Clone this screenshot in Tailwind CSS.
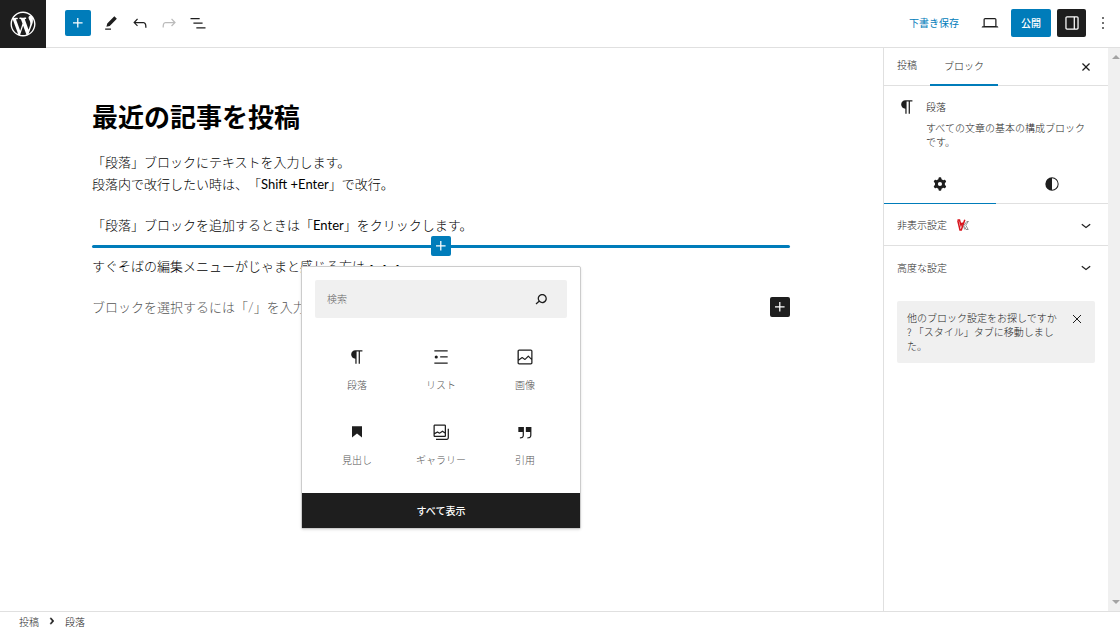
<!DOCTYPE html>
<html lang="ja">
<head>
  <meta charset="UTF-8" />
  <meta name="viewport" content="width=device-width, initial-scale=1.0"/>
  <title>投稿の編集</title>
  <script src="https://cdn.jsdelivr.net/npm/@tailwindcss/browser@4"></script>
</head>
<body class="h-screen flex flex-col overflow-hidden bg-white text-[#1e1e1e] text-[10px] font-light font-['Noto_Sans_CJK_JP',sans-serif] [text-spacing-trim:space-all]">

  <!-- Header -->
  <header class="flex h-12 shrink-0 border-b border-[#e0e0e0]">
    <a href="#" aria-label="投稿一覧" class="flex w-[46px] h-12 shrink-0 items-center justify-center bg-[#1e1e1e] text-white">
      <svg class="size-[30px]" viewBox="-2 -2 24 24" fill="currentColor"><path d="M20 10c0-5.51-4.49-10-10-10C4.48 0 0 4.49 0 10c0 5.52 4.48 10 10 10 5.51 0 10-4.48 10-10zM7.78 15.37L4.37 6.22c.55-.02 1.17-.08 1.17-.08.5-.06.44-1.13-.06-1.11 0 0-1.45.11-2.37.11-.18 0-.37 0-.58-.01C4.12 2.69 6.87 1.11 10 1.11c2.33 0 4.45.87 6.05 2.34-.68-.11-1.65.39-1.65 1.58 0 .74.45 1.36.9 2.1.35.61.55 1.36.55 2.46 0 1.49-1.4 5-1.4 5l-3.03-8.37c.54-.02.82-.17.82-.17.5-.05.44-1.25-.06-1.22 0 0-1.44.12-2.38.12-.87 0-2.33-.12-2.33-.12-.5-.03-.56 1.2-.06 1.22l.92.08 1.26 3.41zM17.41 10c.24-.64.74-1.87.43-4.25.7 1.29 1.05 2.71 1.05 4.25 0 3.29-1.73 6.24-4.4 7.78.97-2.59 1.94-5.2 2.92-7.78zM6.1 18.09C3.12 16.65 1.11 13.53 1.11 10c0-1.3.23-2.48.72-3.59C3.25 10.3 4.67 14.2 6.1 18.09zm4.03-6.63l2.58 6.98c-.86.29-1.76.45-2.71.45-.79 0-1.57-.11-2.29-.33.81-2.38 1.62-4.74 2.42-7.1z"/></svg>
    </a>
    <div class="flex flex-1 h-[46px] items-center justify-between pl-[19px] pr-[7px]">
      <div class="flex items-center">
        <button aria-label="ブロック挿入" class="flex size-[26px] mr-[5px] items-center justify-center rounded-xs bg-[#007cba] text-white">
          <svg class="size-5" viewBox="0 0 24 24" fill="currentColor"><path d="M11 12.5V17.5H12.5V12.5H17.5V11H12.5V6H11V11H6V12.5H11Z"/></svg>
        </button>
        <button aria-label="ツール" class="flex w-[29px] justify-center">
          <svg class="size-5" viewBox="0 0 24 24" fill="currentColor"><path d="m19 7-3-3-8.5 8.5-1 4 4-1L19 7Zm-7 11.5H5V20h7v-1.5Z"/></svg>
        </button>
        <button aria-label="元に戻す" class="flex w-[29px] justify-center">
          <svg class="size-5" viewBox="0 0 24 24" fill="currentColor"><path d="M18.3 11.7c-.6-.6-1.4-.9-2.3-.9H6.7l2.9-3.3-1.1-1-4.5 5L8.5 16l1-1-2.7-2.7H16c.5 0 .9.2 1.3.5 1 1 1 3.4 1 4.5v.3h1.5v-.2c0-1.5 0-4.3-1.5-5.7z"/></svg>
        </button>
        <button aria-label="やり直し" disabled class="flex w-[29px] justify-center text-[#bbb]">
          <svg class="size-5" viewBox="0 0 24 24" fill="currentColor"><path d="M15.6 6.5l-1.1 1 2.9 3.3H8c-.9 0-1.7.3-2.3.9-1.4 1.5-1.4 4.2-1.4 5.6v.2h1.5v-.3c0-1.1 0-3.5 1-4.5.3-.3.7-.5 1.3-.5h9.2L14.5 15l1.1 1.1 4.6-4.6-4.6-5z"/></svg>
        </button>
        <button aria-label="リスト表示" class="flex w-[29px] justify-center">
          <svg class="size-5" viewBox="0 0 24 24" fill="currentColor"><path d="M3 6h11v1.5H3V6Zm3.5 5.5h11V13h-11v-1.5ZM21 17H10v1.5h11V17Z"/></svg>
        </button>
      </div>
      <div class="flex items-center">
        <button class="px-4 pb-[2px] font-normal text-[#007cba]">下書き保存</button>
        <button aria-label="プレビュー" class="flex w-[29px] mr-[7px] justify-center">
          <svg class="size-5" viewBox="0 0 24 24" fill="currentColor"><path d="M20.5 16h-.7V8c0-1.1-.9-2-2-2H6.2c-1.1 0-2 .9-2 2v8h-.7c-.8 0-1.5.7-1.5 1.5h20c0-.8-.7-1.5-1.5-1.5zM5.7 8c0-.3.2-.5.5-.5h11.6c.3 0 .5.2.5.5v7.6H5.7V8z"/></svg>
        </button>
        <button class="w-10 h-7 mr-[6px] pb-[2px] rounded-xs bg-[#007cba] font-medium text-white">公開</button>
        <button aria-label="設定" class="flex w-[29px] h-7 mr-[7px] items-center justify-center rounded-xs bg-[#1e1e1e] text-white">
          <svg class="size-5" viewBox="0 0 24 24" fill="currentColor"><path d="M18 4H6c-1.1 0-2 .9-2 2v12c0 1.1.9 2 2 2h12c1.1 0 2-.9 2-2V6c0-1.1-.9-2-2-2zm-4 14.5H6c-.3 0-.5-.2-.5-.5V6c0-.3.2-.5.5-.5h8v13zm4.5-.5c0 .3-.2.5-.5.5h-2.5v-13H18c.3 0 .5.2.5.5v12z"/></svg>
        </button>
        <button aria-label="オプション" class="flex justify-center">
          <svg class="size-5" viewBox="0 0 24 24" fill="currentColor"><path d="M13 19h-2v-2h2v2zm0-6h-2v-2h2v2zm0-6h-2V5h2v2z"/></svg>
        </button>
      </div>
    </div>
  </header>

  <div class="flex flex-1 min-h-0">
    <!-- Canvas -->
    <main class="flex-1 min-w-0 px-[92px] pt-[51px] text-black">
      <div class="max-w-[698px] text-[13px] leading-[22px] font-['Lato','Noto_Sans_CJK_JP',sans-serif]">
        <h1 class="mb-4 text-[26px] leading-9 font-bold">最近の記事を投稿</h1>
        <p class="mb-[19px]">「段落」ブロックにテキストを入力します。<br>段落内で改行したい時は、「<span class="font-normal">Shift +Enter</span>」で改行。</p>
        <div class="relative mb-[19px]">
          <p>「段落」ブロックを追加するときは「<span class="font-normal">Enter</span>」をクリックします。</p>

          <!-- Insertion point -->
          <div class="absolute inset-x-0 top-full h-5 flex items-center">
            <div class="w-full h-[3px] rounded-full bg-[#007cba]"></div>
            <button aria-label="ブロックを追加" class="absolute left-1/2 -translate-x-1/2 flex size-5 items-center justify-center rounded-xs bg-[#007cba] text-white">
              <svg class="size-5" viewBox="0 0 24 24" fill="currentColor"><path d="M11 12.5V17.5H12.5V12.5H17.5V11H12.5V6H11V11H6V12.5H11Z"/></svg>
            </button>
          </div>

          <!-- Quick inserter -->
          <div class="absolute z-10 top-full left-1/2 -translate-x-1/2 mt-[30px] w-[280px] rounded-xs border border-[#ccc] bg-white text-[#1e1e1e] text-[10px] leading-4 shadow-sm font-['Noto_Sans_CJK_JP',sans-serif]">
            <div class="flex h-[38px] mx-[13px] mt-[13px] items-center rounded-xs bg-[#f0f0f0] pl-3 pr-4">
              <input type="search" aria-label="検索" placeholder="検索" class="flex-1 min-w-0 bg-transparent outline-none placeholder:text-[#666]">
              <svg class="size-5" viewBox="0 0 24 24" fill="currentColor"><path d="M13.5 6C10.5 6 8 8.5 8 11.5c0 1.1.3 2.1.9 3l-3.4 3 1 1.1 3.4-2.9c1 .9 2.2 1.4 3.6 1.4 3 0 5.5-2.5 5.5-5.5C19 8.5 16.5 6 13.500 6zm0 9.500c-2.200 0-4-1.800-4-4s1.800-4 4-4 4 1.800 4 4-1.800 4-4 4z"/></svg>
            </div>
            <div class="grid grid-cols-3 mx-[13px] mt-[23px] mb-[2px] text-[#555]">
              <button class="flex h-[75px] flex-col items-center gap-[10px] pt-[6px]">
                <svg class="size-5 text-[#1e1e1e]" viewBox="0 0 24 24" fill="currentColor"><path d="m9.996 14v-.225l.004 0v6.225h1.5v-14.5h2.5v14.5h1.5v-14.5h3v-1.5h-8.504c-2.761 0-5 2.239-5 5 0 2.761 2.239 5 5 5z"/></svg>
                段落
              </button>
              <button class="flex h-[75px] flex-col items-center gap-[10px] pt-[6px]">
                <svg class="size-5 text-[#1e1e1e]" viewBox="0 0 24 24" fill="currentColor"><path d="M4 4v1.5h16V4H4zm7 8.7h9v-1.5h-9v1.5zM4 20h16v-1.5H4V20zm4.2-8a1.9 1.9 0 1 0-3.8 0 1.9 1.9 0 0 0 3.8 0z"/></svg>
                リスト
              </button>
              <button class="flex h-[75px] flex-col items-center gap-[10px] pt-[6px]">
                <svg class="size-5 text-[#1e1e1e]" viewBox="0 0 24 24" fill="currentColor"><path d="M19 3H5c-1.1 0-2 .9-2 2v14c0 1.1.9 2 2 2h14c1.1 0 2-.9 2-2V5c0-1.1-.9-2-2-2zM5 4.5h14c.3 0 .5.2.5.5v8.4l-3-2.9c-.3-.3-.8-.3-1 0L11.9 14 9 12c-.3-.2-.6-.2-.8 0l-3.6 2.6V5c-.1-.3.1-.5.4-.5zm14 15H5c-.3 0-.5-.2-.5-.5v-2.4l4.1-3 3 1.9c.3.2.7.2.9-.1L16 12l3.5 3.4V19c0 .3-.2.5-.5.5z"/></svg>
                画像
              </button>
              <button class="flex h-[75px] flex-col items-center gap-[10px] pt-[6px]">
                <svg class="size-5 text-[#1e1e1e]" viewBox="0 0 24 24" fill="currentColor"><path d="M6 5V18.591L12 13.847L18 18.591V5H6Z"/></svg>
                見出し
              </button>
              <button class="flex h-[75px] flex-col items-center gap-[10px] pt-[6px]">
                <svg class="size-5 text-[#1e1e1e]" viewBox="0 0 24 24" fill="currentColor" fill-rule="evenodd"><path d="M16.375 4.5H4.625a.125.125 0 0 0-.125.125v8.254l2.859-1.54a.75.75 0 0 1 .68-.016l2.384 1.142 2.89-2.074a.75.75 0 0 1 .874 0l2.313 1.66V4.625a.125.125 0 0 0-.125-.125Zm.125 9.398-2.75-1.975-2.813 2.02a.75.75 0 0 1-.76.067l-2.444-1.17L4.5 14.583v1.792c0 .069.056.125.125.125h11.75a.125.125 0 0 0 .125-.125v-2.477ZM4.625 3C3.728 3 3 3.728 3 4.625v11.75C3 17.273 3.728 18 4.625 18h11.75c.898 0 1.625-.727 1.625-1.625V4.625C18 3.728 17.273 3 16.375 3H4.625ZM20 8v11c0 .69-.31 1-.999 1H6v1.5h13.001c1.52 0 2.499-.982 2.499-2.5V8H20Z"/></svg>
                ギャラリー
              </button>
              <button class="flex h-[75px] flex-col items-center gap-[10px] pt-[6px]">
                <svg class="size-5 text-[#1e1e1e]" viewBox="0 0 24 24" fill="currentColor"><path d="M13 6v6h5.2v4c0 .8-.2 1.4-.5 1.7-.6.6-1.6.6-2.5.5h-.3v1.5h.5c1 0 2.3-.1 3.3-1 .6-.6 1-1.6 1-2.8V6H13zm-9 6h5.2v4c0 .8-.2 1.4-.5 1.7-.6.6-1.6.6-2.5.5h-.3v1.5h.5c1 0 2.3-.1 3.3-1 .6-.6 1-1.6 1-2.8V6H4v6z"/></svg>
                引用
              </button>
            </div>
            <button class="block w-full h-[35px] bg-[#1e1e1e] font-medium text-white">すべて表示</button>
          </div>
        </div>
        <p class="mb-[19px]">すぐそばの編集メニューがじゃまと感じる方は・・・</p>
        <div class="flex items-center justify-between">
          <p class="text-[#555]">ブロックを選択するには「/」を入力</p>
          <button aria-label="ブロックを追加" class="flex size-5 items-center justify-center rounded-xs bg-[#1e1e1e] text-white">
            <svg class="size-5" viewBox="0 0 24 24" fill="currentColor"><path d="M11 12.5V17.5H12.5V12.5H17.5V11H12.5V6H11V11H6V12.5H11Z"/></svg>
          </button>
        </div>
      </div>
    </main>

    <!-- Settings sidebar -->
    <aside class="w-[225px] shrink-0 border-l border-[#e0e0e0]">
      <div class="flex h-[38px] items-stretch border-b border-[#e0e0e0]">
        <button class="px-[13px] pb-1">投稿</button>
        <button class="-mb-px px-[14px] pb-[2px] border-b-2 border-[#007cba]">ブロック</button>
        <button aria-label="設定を閉じる" class="ml-auto mr-3">
          <svg class="size-5" viewBox="0 0 24 24" fill="currentColor"><path d="M12 13.06l3.712 3.713 1.061-1.06L13.061 12l3.712-3.712-1.06-1.06L12 10.938 8.288 7.227l-1.061 1.06L10.939 12l-3.712 3.712 1.06 1.061L12 13.061z"/></svg>
        </button>
      </div>

      <div class="flex gap-[9px] pt-[11px] pl-[13px] pr-2">
        <svg class="size-5 shrink-0" viewBox="0 0 24 24" fill="currentColor"><path d="m9.996 14v-.225l.004 0v6.225h1.5v-14.5h2.5v14.5h1.5v-14.5h3v-1.5h-8.504c-2.761 0-5 2.239-5 5 0 2.761 2.239 5 5 5z"/></svg>
        <div>
          <h2 class="leading-5">段落</h2>
          <p class="mt-1 leading-[14px]">すべての文章の基本の構成ブロック<br>です。</p>
        </div>
      </div>

      <div class="grid grid-cols-2 mt-4">
        <button aria-label="設定" class="flex h-[39px] items-center justify-center border-b border-[#007cba]">
          <svg class="size-5" viewBox="0 0 24 24" fill="currentColor" fill-rule="evenodd"><path d="M10.289 4.836A1 1 0 0111.275 4h1.306a1 1 0 01.987.836l.244 1.466c.787.26 1.503.679 2.108 1.218l1.393-.522a1 1 0 011.216.437l.653 1.13a1 1 0 01-.23 1.273l-1.148.944a6.025 6.025 0 010 2.435l1.149.946a1 1 0 01.23 1.272l-.653 1.13a1 1 0 01-1.216.437l-1.394-.522c-.605.54-1.32.958-2.108 1.218l-.244 1.466a1 1 0 01-.987.836h-1.306a1 1 0 01-.986-.836l-.244-1.466a5.995 5.995 0 01-2.108-1.218l-1.394.522a1 1 0 01-1.217-.436l-.653-1.131a1 1 0 01.23-1.272l1.149-.946a6.026 6.026 0 010-2.435l-1.148-.944a1 1 0 01-.23-1.272l.653-1.131a1 1 0 011.217-.437l1.393.522a5.994 5.994 0 012.108-1.218l.244-1.466zM14.429 12a2.500 2.500 0 11-5 0 2.500 2.500 0 015 0z"/></svg>
        </button>
        <button aria-label="スタイル" class="flex h-[39px] items-center justify-center border-b border-[#e0e0e0]">
          <svg class="size-5" viewBox="0 0 24 24" fill="currentColor" fill-rule="evenodd"><path d="M20 12a8 8 0 1 1-16 0 8 8 0 0 1 16 0Zm-1.2 0a6.8 6.8 0 0 1-6.8 6.8V5.2a6.8 6.8 0 0 1 6.8 6.8Z"/></svg>
        </button>
      </div>

      <button class="flex w-full h-[42px] items-center border-b border-[#e0e0e0] pl-[13px] pr-3">
        非表示設定
        <svg class="w-3 h-3 ml-[10px]" viewBox="0 0 12 12" fill="none">
          <path d="M.5 1h2L4 6.500 5.500 3.500M.8 1.500 3 11h1.300L7.800.8" stroke="#d8141c" stroke-width="1.500"/>
          <path d="M11.600 2.500H9.800L6.500 7l1.200 3.500M11.200 2.500 8.800 6.300l2.400 4.200H9L7.500 7.500" stroke="#777" stroke-width=".8"/>
        </svg>
        <svg class="size-5 ml-auto" viewBox="0 0 24 24" fill="currentColor"><path d="M17.5 11.6L12 16l-5.5-4.4.9-1.2L12 14l4.5-3.6 1 1.2z"/></svg>
      </button>
      <button class="flex w-full h-[42px] items-center pl-[13px] pr-3">
        高度な設定
        <svg class="size-5 ml-auto" viewBox="0 0 24 24" fill="currentColor"><path d="M17.5 11.6L12 16l-5.5-4.4.9-1.2L12 14l4.5-3.6 1 1.2z"/></svg>
      </button>

      <div class="flex mx-[13px] mt-[13px] items-start rounded-xs bg-[#f0f0f0] py-[10px] pl-[10px] pr-[10px]">
        <p class="flex-1 leading-[14px]">他のブロック設定をお探しですか<br>? 「スタイル」タブに移動しまし<br>た。</p>
        <button aria-label="通知を閉じる">
          <svg class="size-4" viewBox="0 0 24 24" fill="none" stroke="currentColor" stroke-width="1.5"><path d="M6 6l12 12M18 6 6 18"/></svg>
        </button>
      </div>
    </aside>

    <!-- Scrollbar track -->
    <div class="flex w-3 shrink-0 flex-col items-end justify-between bg-[#f0f0f0] py-[7px] text-[#a3a3a3]">
      <svg class="w-2 h-1" viewBox="0 0 8 4" fill="currentColor"><path d="M0 4 4 0l4 4z"/></svg>
      <svg class="w-2 h-1" viewBox="0 0 8 4" fill="currentColor"><path d="M0 0l4 4 4-4z"/></svg>
    </div>
  </div>

  <!-- Breadcrumb -->
  <footer class="flex h-[19px] shrink-0 items-center border-t border-[#e0e0e0] pl-[19px]">
    <button>投稿</button>
    <svg class="size-5 mx-[3px]" viewBox="0 0 24 24" fill="currentColor" stroke="currentColor" stroke-width=".6"><path d="M10.862 8.041L14.281 12.029L10.862 16.017L9.723 15.041L12.305 12.029L9.723 9.017L10.862 8.041Z"/></svg>
    <button>段落</button>
  </footer>
</body>
</html>
